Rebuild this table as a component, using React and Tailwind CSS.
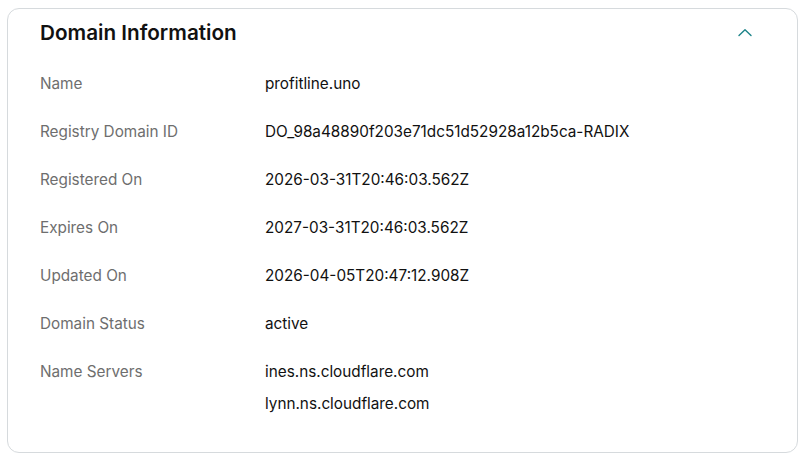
// Domain information card — label/value rows with a collapse toggle

const rows = [
  { label: 'Name', values: ['profitline.uno'] },
  { label: 'Registry Domain ID', values: ['DO_98a48890f203e71dc51d52928a12b5ca-RADIX'] },
  { label: 'Registered On', values: ['2026-03-31T20:46:03.562Z'] },
  { label: 'Expires On', values: ['2027-03-31T20:46:03.562Z'] },
  { label: 'Updated On', values: ['2026-04-05T20:47:12.908Z'] },
  { label: 'Domain Status', values: ['active'] },
  { label: 'Name Servers', values: ['ines.ns.cloudflare.com', 'lynn.ns.cloudflare.com'] },
];

function ChevronUp() {
  return (
    <svg width="16" height="16" viewBox="0 0 16 16" fill="none" aria-hidden="true">
      <path d="M2 10.6 8 4.8l6 5.8" stroke="#1d8489" strokeWidth="1.4" strokeLinecap="round" strokeLinejoin="round" />
    </svg>
  );
}

export default function App() {
  return (
    <div className="min-h-screen bg-white pl-[7px] pr-[7px] pt-[8px] font-['Inter','Liberation_Sans',sans-serif]">
      <section className="w-[791px] rounded-xl border border-[#d6dadd] px-8 pb-[24px]">
        {/* header */}
        <div className="flex h-[47px] items-center justify-between">
          <h2 className="text-[20.7px] font-semibold text-[#111]">Domain Information</h2>
          <button className="mr-[8px] flex h-6 w-6 items-center justify-center">
            <ChevronUp />
          </button>
        </div>

        {/* rows */}
        <dl className="mt-[4px]">
          {rows.map((r) => (
            <div key={r.label} className="flex py-3 text-[15.3px] leading-6">
              <dt className="w-[225px] shrink-0 text-[#6e6e6e]">{r.label}</dt>
              <dd className="flex flex-col gap-2 text-[#111]">
                {r.values.map((v) => (
                  <span key={v}>{v}</span>
                ))}
              </dd>
            </div>
          ))}
        </dl>
      </section>
    </div>
  );
}
